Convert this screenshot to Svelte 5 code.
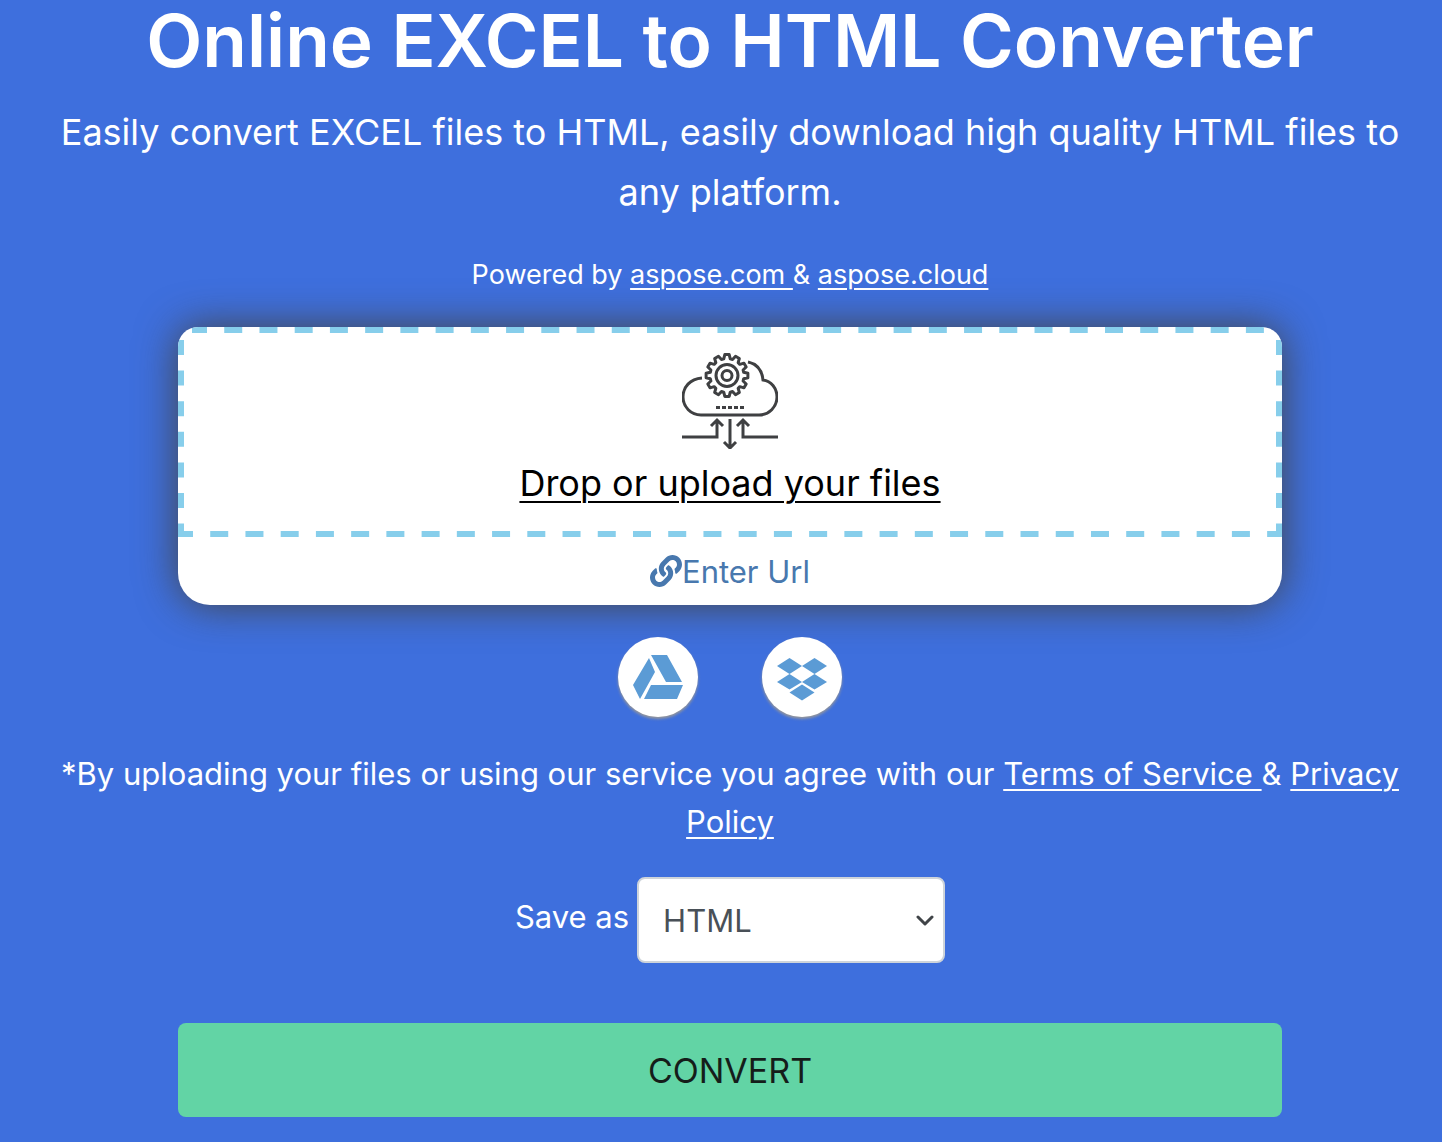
<script>
  let format = $state('HTML');
  const formats = ['HTML', 'PDF', 'CSV', 'DOCX', 'JSON'];

  // Outline of a twelve-toothed gear centred on (45, 22.5).
  const corners = [[-11, 17], [-6, 21], [6, 21], [11, 17]];
  const gear = Array.from({ length: 12 }, (_, i) =>
    corners.map(([offset, radius]) => {
      const angle = ((i * 30 + offset) * Math.PI) / 180;
      return `${45 + radius * Math.sin(angle)} ${22.5 - radius * Math.cos(angle)}`;
    }).join(' ')
  ).join(' ');
</script>

<main>
  <h1>Online EXCEL to HTML Converter</h1>
  <p class="lead">Easily convert EXCEL files to HTML, easily download high quality HTML files to any platform.</p>
  <p class="powered">Powered by <a href="#aspose">aspose.com&nbsp;</a>&amp; <a href="#cloud">aspose.cloud</a></p>

  <section class="card">
    <button class="drop" type="button">
      <svg class="dashes" aria-hidden="true">
        <line class="horizontal" x1="14" y1="3" x2="100%" y2="3" stroke-dashoffset="3" />
        <line class="horizontal" x1="0" y1="207" x2="100%" y2="207" stroke-dashoffset="3" />
        <line class="vertical" x1="3" y1="13" x2="3" y2="210" />
        <line class="vertical right" x1="100%" y1="13" x2="100%" y2="210" />
      </svg>
      <svg class="cloud" viewBox="0 0 96 96" aria-hidden="true">
        <path d="M20 25C8 26 1 34 1 44c0 10 8 18 18 18h58c10 0 18-8 18-18 0-9-6-16-14-17C80 17 75 11 66 9" />
        <polygon points={gear} stroke-linejoin="round" />
        <circle cx="45" cy="22.500" r="11" />
        <circle cx="45" cy="22.500" r="5" />
        <path d="M34 54.500h28" stroke-dasharray="4 2" />
        <path d="M0 84h35V68M29 73l6-6 6 6M48 66v28M42 89l6 6 6-6M96 84H61V68M55 73l6-6 6 6" />
      </svg>
      <span>Drop or upload your files</span>
    </button>
    <a class="url" href="#url">
      <svg viewBox="0 0 512 512" aria-hidden="true"><path d="M326.612 185.391c59.747 59.809 58.927 155.698.36 214.590-.110.120-.240.250-.360.370l-67.200 67.200c-59.270 59.270-155.699 59.262-214.960 0-59.270-59.260-59.270-155.700 0-214.960l37.106-37.106c9.840-9.840 26.786-3.300 27.294 10.606.648 17.722 3.826 35.527 9.690 52.721 1.986 5.822.567 12.262-3.783 16.612l-13.087 13.087c-28.026 28.026-28.905 73.660-1.155 101.960 28.024 28.579 74.086 28.749 102.325.510l67.200-67.190c28.191-28.191 28.073-73.757 0-101.830-3.701-3.694-7.429-6.564-10.341-8.569a16.037 16.037 0 0 1-6.947-12.606c-.396-10.567 3.348-21.456 11.698-29.806l21.054-21.055c5.521-5.521 14.182-6.199 20.584-1.731a152.482 152.482 0 0 1 20.522 17.197zM467.547 44.449c-59.261-59.262-155.690-59.270-214.960 0l-67.200 67.200c-.120.120-.250.250-.360.370-58.566 58.892-59.387 154.781.360 214.590a152.454 152.454 0 0 0 20.521 17.196c6.402 4.468 15.064 3.789 20.584-1.731l21.054-21.055c8.350-8.350 12.094-19.239 11.698-29.806a16.037 16.037 0 0 0-6.947-12.606c-2.912-2.005-6.640-4.875-10.341-8.569-28.073-28.073-28.191-73.639 0-101.830l67.200-67.190c28.239-28.239 74.300-28.069 102.325.510 27.750 28.300 26.872 73.934-1.155 101.960l-13.087 13.087c-4.350 4.350-5.769 10.790-3.783 16.612 5.864 17.194 9.042 34.999 9.690 52.721.509 13.906 17.454 20.446 27.294 10.606l37.106-37.106c59.271-59.259 59.271-155.699.001-214.959z" /></svg><span>Enter Url</span>
    </a>
  </section>

  <div class="sources">
    <button type="button" aria-label="Google Drive">
      <svg viewBox="0 0 80 80" aria-hidden="true"><path d="M33 18h16l15 27H48zM31 21l6 14-15 27-7-14zM33 48h32l-6 14H26z" /></svg>
    </button>
    <button type="button" aria-label="Dropbox">
      <svg viewBox="0 0 80 80" aria-hidden="true"><path d="M27.500 21l12.500 8-12.500 8-12.500-8zM52.500 21l12.500 8-12.500 8-12.500-8zM27.500 37l12.500 8-12.500 7.500-12.500-7.500zM52.500 37l12.500 8-12.500 7.500-12.500-7.500zM40 47.500l12.500 8L40 63.500l-12.500-8z" /></svg>
    </button>
  </div>

  <p class="terms">*By uploading your files or using our service you agree with our <a href="#terms">Terms of Service&nbsp;</a>&amp; <a href="#privacy">Privacy Policy</a></p>

  <div class="save">
    <label for="format">Save as</label>
    <div class="select">
      <select id="format" bind:value={format}>
        {#each formats as name}<option>{name}</option>{/each}
      </select>
      <svg viewBox="0 0 18 12" aria-hidden="true"><path d="M2 2l7 7 7-7" /></svg>
    </div>
  </div>

  <button class="convert" type="button">CONVERT</button>
</main>

<style>
  :global(body) {
    margin: 0;
    background: #3e6fdd;
  }
  main {
    box-sizing: border-box;
    padding: 0 32px 25px 50px;
    color: #fff;
    font-family: Inter, "Liberation Sans", sans-serif;
    font-size: 31px;
    text-align: center;
  }
  h1, p { margin: 0; }
  h1 {
    font-size: 73px;
    line-height: 82px;
    font-weight: 600;
  }
  .lead {
    margin-top: 20px;
    font-size: 36px;
    line-height: 60px;
  }
  .powered {
    margin-top: 32px;
    font-size: 27px;
    line-height: 42px;
  }
  .powered a, .terms a {
    color: #fff;
    text-decoration-thickness: 2px;
    text-underline-offset: 4px;
  }
  button { font: inherit; border: 0; cursor: pointer; }
  .card {
    margin: 31px 128px 0;
    border-radius: 20px 20px 32px 32px;
    background: #fff;
    box-shadow: 0 0 40px #444;
  }
  .drop {
    position: relative;
    display: flex;
    flex-direction: column;
    align-items: center;
    width: 100%;
    height: 210px;
    padding: 26px 0 0;
    border-radius: 20px 20px 0 0;
    overflow: hidden;
    background: transparent;
    color: #000;
    font-size: 36px;
    line-height: 54px;
    text-decoration: underline;
    text-decoration-thickness: 2px;
    text-underline-offset: 5px;
  }
  .drop span { margin-top: 7px; }
  .dashes {
    position: absolute;
    inset: 0;
    width: 100%;
    height: 100%;
    stroke: #87ceeb;
    stroke-width: 6;
  }
  .horizontal { stroke-dasharray: 18 17.230; }
  .vertical { stroke-dasharray: 15 15.600; }
  .right { transform: translateX(-3px); }
  .cloud {
    width: 96px;
    height: 96px;
    fill: none;
    stroke: #3f4042;
    stroke-width: 3;
  }
  .url {
    display: flex;
    align-items: center;
    justify-content: center;
    height: 68px;
    color: #4878ae;
    text-decoration: none;
  }
  .url svg { width: 32px; height: 32px; fill: currentColor; }
  .sources {
    display: flex;
    justify-content: center;
    gap: 64px;
    margin-top: 32px;
  }
  .sources button {
    width: 80px;
    height: 80px;
    padding: 0;
    border-radius: 50%;
    background: #fff;
    box-shadow: 0 2px 3px #999;
  }
  .sources svg { display: block; fill: #5b9bd5; }
  .terms {
    margin-top: 33px;
    line-height: 48px;
  }
  .save {
    display: flex;
    align-items: center;
    justify-content: center;
    gap: 8px;
    margin-top: 31px;
  }
  .save label { padding-bottom: 8px; }
  .select { position: relative; }
  select {
    appearance: none;
    display: block;
    box-sizing: border-box;
    width: 308px;
    height: 86px;
    padding: 0 24px;
    border: 2px solid #ced4da;
    border-radius: 8px;
    background: #fff;
    color: #495057;
    font: inherit;
  }
  .select svg {
    position: absolute;
    top: 38px;
    right: 11px;
    width: 18px;
    height: 12px;
    fill: none;
    stroke: #404448;
    stroke-width: 3;
    stroke-linecap: round;
    stroke-linejoin: round;
    pointer-events: none;
  }
  .convert {
    display: block;
    width: calc(100% - 256px);
    height: 94px;
    margin: 60px 128px 0;
    border-radius: 8px;
    background: #62d4a5;
    color: #151d1a;
    font-size: 34px;
  }
</style>
